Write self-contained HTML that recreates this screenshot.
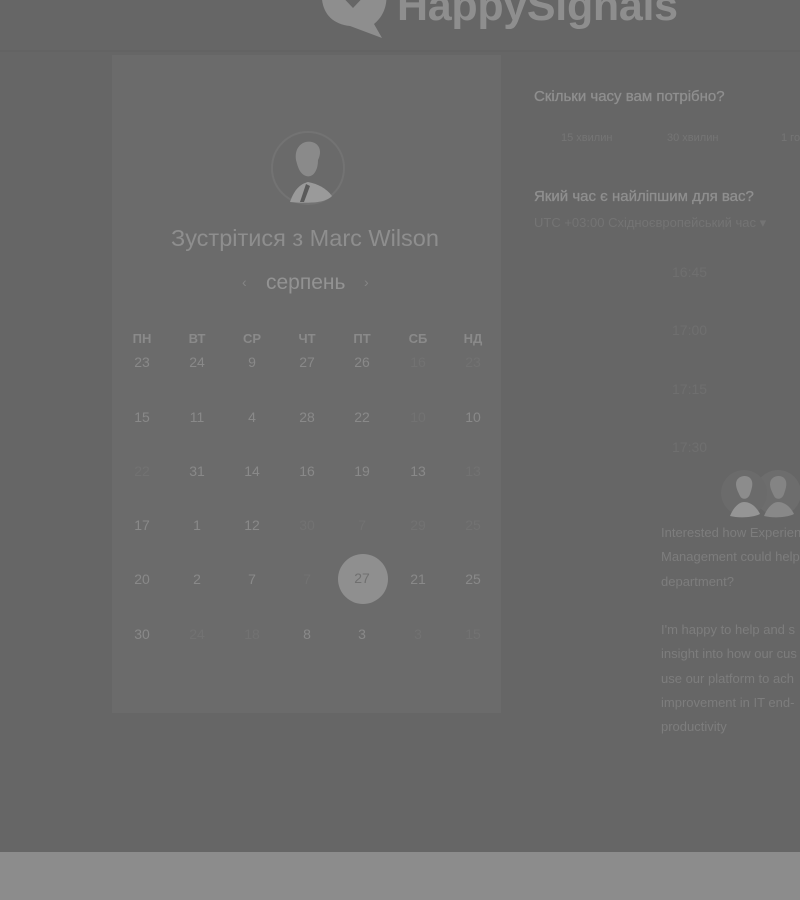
<!DOCTYPE html>
<html><head><meta charset="utf-8"><style>
*{margin:0;padding:0;box-sizing:border-box}
body{width:800px;height:900px;background:#666;overflow:hidden;position:relative;font-family:"Liberation Sans","DejaVu Sans",sans-serif}
.abs{position:absolute;white-space:nowrap}
.card{position:absolute;left:112px;top:55px;width:389px;height:658px;background:#6b6b6b}
.hdrline{position:absolute;left:0;top:50px;width:800px;height:2px;background:#636363}
.bottom{position:absolute;left:0;top:852px;width:800px;height:48px;background:#8c8c8c}
.dow{position:absolute;top:331px;width:40px;margin-left:-20px;text-align:center;font-size:13px;font-weight:bold;color:#8a8a8a}
.d{position:absolute;width:40px;margin-left:-20px;text-align:center;font-size:14px;color:#898989}
.d.x{color:#727272}
.t{position:absolute;left:672px;font-size:14px;color:#6f6f6f}
.p{position:absolute;left:661px;font-size:13px;color:#7d7d7d;line-height:24.3px;white-space:nowrap}
</style></head><body>
<div class="hdrline"></div>
<svg class="abs" style="left:316px;top:-10px" width="74" height="50" viewBox="0 0 74 50">
<path d="M6 0 C4 20 14 34 34 36 L66 48 L58 34 C68 26 72 14 70 0 Z" fill="#8e8e8e"/>
<path d="M20 0 L37 18 L54 0 Z" fill="#666"/>
</svg>
<div class="abs" style="left:397px;top:-18px;font-size:43px;font-weight:bold;color:#8e8e8e;letter-spacing:-0.3px">HappySignals</div>
<div class="card"></div>
<svg class="abs" style="left:270px;top:130px" width="76" height="76" viewBox="0 0 76 76">
<circle cx="38" cy="38" r="36" fill="#6a6a6a" stroke="#737373" stroke-width="2"/>
<path d="M26 30 C24 16 34 10 42 12 C50 14 52 22 48 30 C48 42 42 48 36 46 C30 44 28 38 26 30Z" fill="#8a8a8a"/>
<path d="M20 72 C24 60 30 54 38 52 C48 54 56 58 62 66 C56 72 44 74 20 72Z" fill="#9a9a9a"/>
<path d="M30 72 L36 54 L40 56 L34 72Z" fill="#5a5a5a"/>
</svg>
<div class="abs" style="left:171px;top:225px;font-size:23.5px;color:#8e8e8e">Зустрітися з Marc Wilson</div>
<div class="abs" style="left:242px;top:274px;font-size:14px;color:#858585">‹</div>
<div class="abs" style="left:266px;top:271px;font-size:21px;color:#939393">серпень</div>
<div class="abs" style="left:364px;top:274px;font-size:14px;color:#858585">›</div>
<div class="dow" style="left:142px">ПН</div><div class="dow" style="left:197px">ВТ</div><div class="dow" style="left:252px">СР</div><div class="dow" style="left:307px">ЧТ</div><div class="dow" style="left:362px">ПТ</div><div class="dow" style="left:418px">СБ</div><div class="dow" style="left:473px">НД</div>
<div id="cal"></div>
<svg class="abs" style="left:337px;top:553px" width="52" height="52"><circle cx="26" cy="26" r="25" fill="#8f8f8f"/></svg>
<div class="abs" style="left:342px;top:570px;width:40px;text-align:center;font-size:14px;color:#707070">27</div>
<script>
var rows=[["23","24","9","27","26","x16","x23"],["15","11","4","28","22","x10","10"],["x22","31","14","16","19","13","x13"],["17","1","12","x30","x7","x29","x25"],["20","2","7","x7","","21","25"],["30","x24","x18","8","3","x3","x15"]];
var cx=[142,197,252,307,362,418,473],ys=[354,409,463,517,571,626],h="";
rows.forEach(function(r,i){r.forEach(function(v,j){if(!v)return;var x=v[0]=="x";h+='<div class="d'+(x?' x':'')+'" style="left:'+cx[j]+'px;top:'+ys[i]+'px">'+(x?v.slice(1):v)+'</div>';});});
document.getElementById("cal").innerHTML=h;
</script>
<div class="abs" style="left:534px;top:88px;font-size:15px;color:#8f8f8f;-webkit-text-stroke:0.3px #8f8f8f">Скільки часу вам потрібно?</div>
<div class="abs" style="left:561px;top:132px;font-size:11px;color:#757575">15 хвилин</div>
<div class="abs" style="left:667px;top:132px;font-size:11px;color:#757575">30 хвилин</div>
<div class="abs" style="left:781px;top:132px;font-size:11px;color:#757575">1 го</div>
<div class="abs" style="left:534px;top:188px;font-size:15px;color:#8f8f8f;-webkit-text-stroke:0.3px #8f8f8f">Який час є найліпшим для вас?</div>
<div class="abs" style="left:534px;top:215px;font-size:13px;color:#747474">UTC +03:00 Східноєвропейський час ▾</div>
<div class="t" style="top:264px">16:45</div>
<div class="t" style="top:322px">17:00</div>
<div class="t" style="top:381px">17:15</div>
<div class="t" style="top:439px">17:30</div>
<svg class="abs" style="left:720px;top:468px" width="80" height="52" viewBox="0 0 80 52">
<circle cx="58" cy="25" r="23" fill="#6d6d6d"/>
<path d="M50 16 C50 8 60 6 64 10 C68 14 66 20 64 26 C62 32 56 32 54 28 C52 24 50 20 50 16Z" fill="#848484"/>
<path d="M44 48 C48 38 54 34 58 34 C64 34 70 38 74 46 C66 50 52 50 44 48Z" fill="#888"/>
<circle cx="24" cy="25" r="23" fill="#6b6b6b"/>
<path d="M16 16 C16 8 26 6 30 10 C34 14 32 20 30 26 C28 32 22 32 20 28 C18 24 16 20 16 16Z" fill="#8c8c8c"/>
<path d="M10 48 C14 38 20 34 24 34 C30 34 36 38 40 46 C32 50 18 50 10 48Z" fill="#959595"/>
</svg>
<div class="p" style="top:521px">Interested how Experience<br>Management could help<br>department?</div>
<div class="p" style="top:618px">I'm happy to help and s<br>insight into how our cus<br>use our platform to ach<br>improvement in IT end-<br>productivity</div>
<div class="bottom"></div>
</body></html>
